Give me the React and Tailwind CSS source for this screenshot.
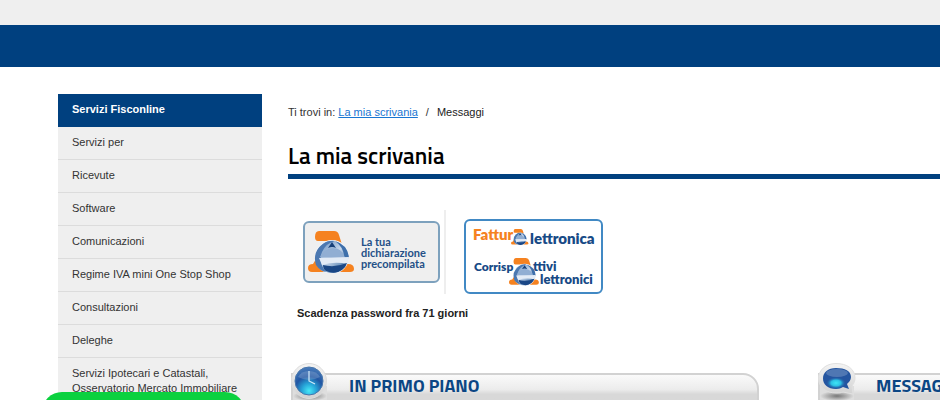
const menu = [
  'Servizi per',
  'Ricevute',
  'Software',
  'Comunicazioni',
  'Regime IVA mini One Stop Shop',
  'Consultazioni',
  'Deleghe',
  'Servizi Ipotecari e Catastali, Osservatorio Mercato Immobiliare',
];

function AgencyShapes() {
  return (
    <>
      <path d="M11 0H26Q30 0 31 4L40 33Q46 33 46 38Q46 41 42 41H4Q0 41 0 37Q0 33 5 33L19 10H10Q7 10 7 6Q7 0 11 0Z" fill="#f58220" />
      <circle cx="24" cy="26" r="17" fill="#f1f5fb" />
      <circle cx="24" cy="26" r="16" fill="url(#globe)" />
      <path d="M15 13Q4 21 8 34Q12 40 18 41Q10 31 14 21Q18 12 27 10Q20 9 15 13Z" fill="#4b78b1" />
      <path d="M27 10Q40 14 41 27L36 29Q37 17 27 10Z" fill="#3e6fab" />
      <path d="M12 26Q15 18 25 17Q34 17 37 27Q30 28 12 26Z" fill="#91aed3" />
      <path d="M11 27L41 26L40 33Q26 30 14 34Z" fill="#e3ebf6" />
      <path d="M20 17L24 11L28 17Q24 15 20 17Z" fill="#173f78" />
      <path d="M15 34Q27 37 39 32Q38 36 34 39Q27 44 18 40Q15 38 15 34Z" fill="#1a4786" />
    </>
  );
}

function Globe() {
  return (
    <defs>
      <linearGradient id="globe" x1="0" y1="0" x2="1" y2="1">
        <stop offset="0" stopColor="#5583b9" />
        <stop offset=".5" stopColor="#c7d7eb" />
        <stop offset="1" stopColor="#1c5594" />
      </linearGradient>
    </defs>
  );
}

function ElectronicLogo() {
  return (
    <svg viewBox="0 0 139 75" className="block h-[75px] w-[139px]" fontFamily="Lato, 'Open Sans', sans-serif" fontWeight="800" fontSize="14" role="img" aria-label="Fattura elettronica, Corrispettivi elettronici">
      <Globe />
      <rect x="1" y="1" width="137" height="73" rx="5" fill="#fff" stroke="#4189c4" strokeWidth="2" />
      <g transform="translate(47 10) scale(.38)"><AgencyShapes /></g>
      <g transform="translate(45 39) scale(.65)"><AgencyShapes /></g>
      <text x="9" y="21" fill="#f58220" fontSize="15">Fattur</text>
      <text x="66" y="25" fill="#174a86" fontSize="15">lettronica</text>
      <text x="10" y="52" fill="#174a86" fontSize="12">Corrisp</text>
      <text x="69" y="52" fill="#174a86" fontSize="13">ttivi</text>
      <text x="76" y="65" fill="#174a86" fontSize="13">lettronici</text>
    </svg>
  );
}

function PanelIcon({ kind }) {
  return (
    <svg viewBox="0 0 38 38" className="absolute -top-[11px] left-0 h-[38px] w-[38px]" aria-hidden="true">
      <defs>
        <radialGradient id={kind + 'Blue'} cx=".5" cy=".85" r=".85">
          <stop offset="0" stopColor="#48e8f7" />
          <stop offset=".3" stopColor="#26a4d8" />
          <stop offset=".6" stopColor="#2156a3" />
          <stop offset="1" stopColor="#4a7dbb" />
        </radialGradient>
        <radialGradient id={kind + 'Glow'}>
          <stop offset="0" stopColor="#3fe6f5" />
          <stop offset=".5" stopColor="#2cc0e4" />
          <stop offset="1" stopColor="#2455a0" stopOpacity="0" />
        </radialGradient>
        <radialGradient id={kind + 'Shade'}>
          <stop offset="0" stopColor="#777" />
          <stop offset="1" stopColor="#dedede" />
        </radialGradient>
        <linearGradient id={kind + 'Rim'} x1="0" y1="0" x2="0" y2="1">
          <stop offset="0" stopColor="#f4f4f4" />
          <stop offset="1" stopColor="#d2d2d2" />
        </linearGradient>
      </defs>
      <path d="M2 24h34v14H2z" fill="#dedede" />
      <ellipse cx="19" cy="34" rx="17" ry="5" fill={`url(#${kind}Shade)`} />
      {kind === 'clock' ? (
        <>
          <circle cx="18" cy="19" r="17.500" fill={`url(#${kind}Rim)`} stroke="#ddd" />
          <circle cx="18" cy="19" r="14" fill={`url(#${kind}Blue)`} stroke="#4876ac" strokeWidth="1" />
          <path d="M7 15a12 10 0 0 1 22 0q-11 6-22 0z" fill="#fff" opacity=".18" />
          <path d="M18 9v10l6 3" fill="none" stroke="#d2ebfa" strokeWidth="1.200" />
        </>
      ) : (
        <>
          <path d="M18 1.500C8 1.500.5 8 .5 16.500S8 31 18 31c3 0 5 0 7-1l10 2-1-8c2-3 3-5 3-8C37 7 29 1.500 18 1.500z" fill={`url(#${kind}Rim)`} stroke="#e0e0e0" />
          <path d="M18 6C10 6 5 10.500 5 16.500s5 10.500 13 10.500c3 0 5-1 7-2l6 2-2-5c2-2 4-4 4-7C33 9 27 6 18 6z" fill="#2455a0" />
          <ellipse cx="18" cy="21" rx="10" ry="6" fill={`url(#${kind}Glow)`} />
          <ellipse cx="19" cy="11" rx="11" ry="4" fill="#fff" opacity=".2" />
        </>
      )}
    </svg>
  );
}

function Panel({ kind, title }) {
  return (
    <section className="relative w-[468px] shrink-0">
      <div className="flex h-[52px] items-start rounded-tr-2xl border-2 border-[#d2d2d2] bg-linear-to-b from-[#fafafa] from-0% via-[#ececec] via-30% to-[#d8d8d8] to-40% pl-14">
        <h2 className="font-['Titillium_Web','Noto_Sans','Open_Sans',sans-serif] text-lg leading-[22px] font-bold whitespace-nowrap text-[#0b4684]">{title}</h2>
      </div>
      <PanelIcon kind={kind} />
    </section>
  );
}

export default function App() {
  return (
    <div className="h-screen overflow-hidden bg-white font-['Liberation_Sans',Arial,sans-serif] text-[11px] leading-[15px] text-[#333]">
      <div className="h-[25px] bg-[#efefef]" />
      <header className="h-[42px] bg-[#00407f]" />
      <div className="flex items-start gap-[26px] pt-[27px] pl-[58px]">
        <nav className="w-[204px] shrink-0 bg-[#efefef]" aria-label="Servizi Fisconline">
          <h2 className="h-[33px] bg-[#00407f] px-3.5 py-2 font-bold text-white">Servizi Fisconline</h2>
          <ul>
            {menu.map((item) => (
              <li key={item} className="border-b border-[#dcdcdc]">
                <a href="#" className="block px-3.5 pt-2 pb-[9px]">{item}</a>
              </li>
            ))}
          </ul>
        </nav>
        <main className="min-w-0 flex-1">
          <nav className="flex pt-[11px] whitespace-pre" aria-label="Percorso">
            <span>Ti trovi in: </span>
            <a href="#" className="text-[#1976d2] underline">La mia scrivania</a>
            <span className="px-2">/</span>
            <span className="text-[#222]">Messaggi</span>
          </nav>
          <h1 className="mt-5 border-b-5 border-[#00407f] pb-0.5 font-['Titillium_Web','Noto_Sans','Open_Sans',sans-serif] text-[23px] leading-8 font-semibold text-black">La mia scrivania</h1>
          <div className="mt-[31px] flex items-start gap-[18px] pl-[15px]">
            <div className="border-r-2 border-[#eee] py-[11px] pr-1">
              <a href="#" className="flex h-[62px] w-[137px] items-center gap-1.5 rounded-md border-2 border-[#7da1bd] bg-[#efefef] pl-[3px] font-['Lato','Open_Sans',sans-serif] text-[11px] leading-[11px] font-bold text-[#245087]">
                <svg viewBox="0 0 47 42" className="h-[42px] w-[47px] shrink-0" aria-hidden="true"><Globe /><AgencyShapes /></svg>
                <span>La tua<br />dichiarazione<br />precompilata</span>
              </a>
            </div>
            <a href="#" className="mt-[9px]"><ElectronicLogo /></a>
          </div>
          <p className="mt-3 pl-[9px] font-bold text-[#222]">Scadenza password fra 71 giorni</p>
          <div className="mt-[52px] flex gap-[59px] pl-[3px]">
            <Panel kind="clock" title="IN PRIMO PIANO" />
            <Panel kind="chat" title="MESSAGGI" />
          </div>
        </main>
      </div>
      <div className="fixed -bottom-8 left-[42px] h-10 w-[203px] rounded-[20px] bg-[#0bd13f]" />
    </div>
  );
}
